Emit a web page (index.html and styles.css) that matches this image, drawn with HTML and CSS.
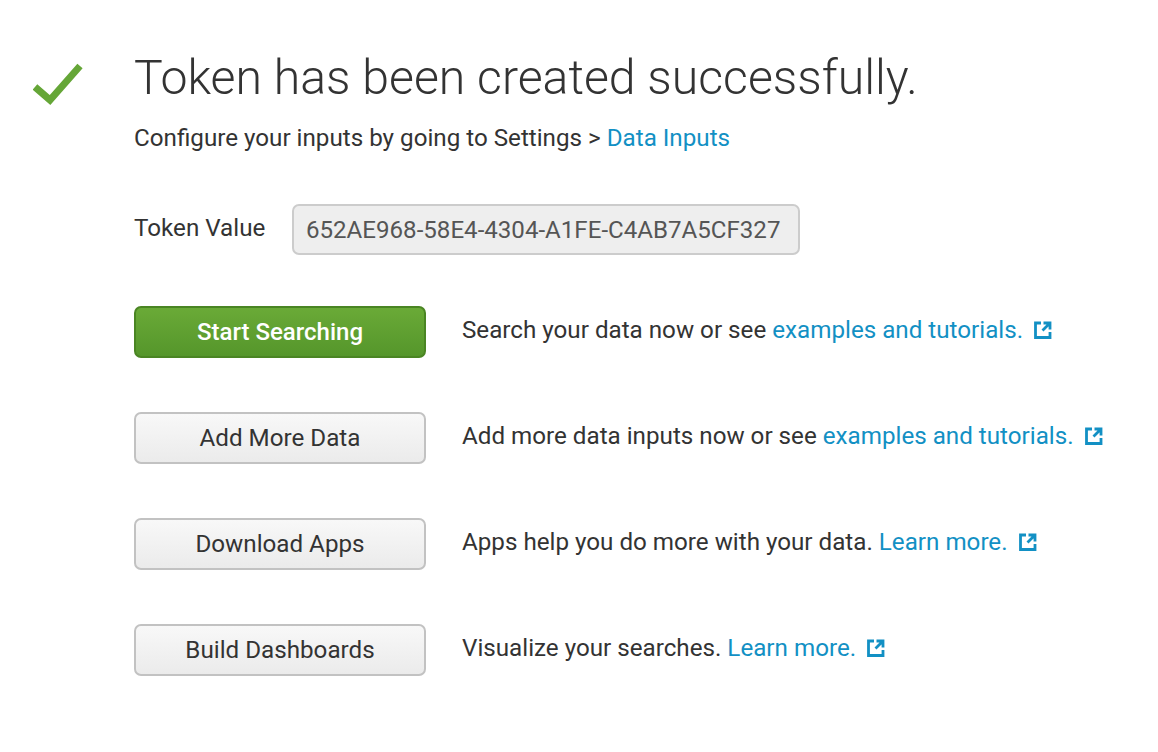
FILE: index.html
```html
<!DOCTYPE html>
<html lang="en">
<head>
<meta charset="utf-8">
<title>Token created</title>
<link rel="stylesheet" href="styles.css">
</head>
<body>
<main class="page">
  <svg class="check" viewBox="0 0 50 44" width="50" height="44" aria-hidden="true"><path d="M2 24 L17 37 L47 3" fill="none" stroke="#65a637" stroke-width="7"/></svg>
  <div class="content">
    <h1 class="title">Token has been created successfully.</h1>
    <p class="sub">Configure your inputs by going to Settings &gt; <a href="#">Data Inputs</a></p>
    <div class="token">
      <span class="token-label">Token Value</span>
      <input class="token-input" value="652AE968-58E4-4304-A1FE-C4AB7A5CF327" readonly>
    </div>
    <div class="actions">
      <div class="row">
        <button class="btn primary">Start Searching</button>
        <p class="desc">Search your data now or see <a href="#">examples and tutorials.</a><svg class="ext" viewBox="0 0 18 18" width="18" height="18" aria-hidden="true"><path d="M7 2H1.5V16.5H16V11M8.5 9.500L15.500 2.500M9.500 2H16V8.500" fill="none" stroke="#1290c4" stroke-width="2.800"/></svg></p>
      </div>
      <div class="row">
        <button class="btn">Add More Data</button>
        <p class="desc">Add more data inputs now or see <a href="#">examples and tutorials.</a><svg class="ext" viewBox="0 0 18 18" width="18" height="18" aria-hidden="true"><path d="M7 2H1.5V16.5H16V11M8.5 9.500L15.500 2.500M9.500 2H16V8.500" fill="none" stroke="#1290c4" stroke-width="2.800"/></svg></p>
      </div>
      <div class="row">
        <button class="btn">Download Apps</button>
        <p class="desc">Apps help you do more with your data. <a href="#">Learn more.</a><svg class="ext" viewBox="0 0 18 18" width="18" height="18" aria-hidden="true"><path d="M7 2H1.5V16.5H16V11M8.5 9.500L15.500 2.500M9.500 2H16V8.500" fill="none" stroke="#1290c4" stroke-width="2.800"/></svg></p>
      </div>
      <div class="row">
        <button class="btn">Build Dashboards</button>
        <p class="desc">Visualize your searches. <a href="#">Learn more.</a><svg class="ext" viewBox="0 0 18 18" width="18" height="18" aria-hidden="true"><path d="M7 2H1.5V16.5H16V11M8.5 9.500L15.500 2.500M9.500 2H16V8.500" fill="none" stroke="#1290c4" stroke-width="2.800"/></svg></p>
      </div>
    </div>
  </div>
</main>
</body>
</html>
```
FILE: styles.css
```css
* { box-sizing: border-box; }
html, body { margin: 0; background: #fff; }
body { font-family: Roboto, "Liberation Sans", sans-serif; color: #333; width: 1158px; height: 752px; overflow: hidden; }
.page { display: flex; align-items: flex-start; padding: 50px 0 0 33px; }
.check { flex: none; margin: 13px 51px 0 0; }
.content { flex: 1; }
.title { margin: 0; font-size: 48.2px; font-weight: 300; line-height: 56px; color: #333; }
.sub { margin: 18px 0 0; font-size: 24.2px; line-height: 28px; }
a { color: #1290c4; text-decoration: none; }
.token { display: flex; align-items: center; margin-top: 52px; }
.token-label { width: 158px; font-size: 24.2px; line-height: 28px; margin-top: -4px; }
.token-input { width: 508px; height: 51px; padding: 0 12px; border: 2px solid #ccc; border-radius: 7px; background: #eee; font: 400 24.1px Roboto, "Liberation Sans", sans-serif; color: #555; outline: none; }
.actions { display: flex; flex-direction: column; gap: 54px; margin-top: 51px; }
.row { display: flex; align-items: center; }
.btn { flex: none; width: 292px; height: 52px; border: 2px solid #c2c2c2; border-radius: 7px; background: linear-gradient(#f8f8f8, #ebebeb); font: 400 24.2px Roboto, "Liberation Sans", sans-serif; color: #333; padding: 0; }
.btn.primary { background: linear-gradient(#6aaa37, #55962b); border-color: #4a8523; color: #fff; font-weight: 500; font-size: 24px; }
.desc { margin: -5px 0 0 36px; font-size: 24.2px; line-height: 28px; display: flex; align-items: center; white-space: pre-wrap; }
.ext { margin-left: 11px; flex: none; }
```
